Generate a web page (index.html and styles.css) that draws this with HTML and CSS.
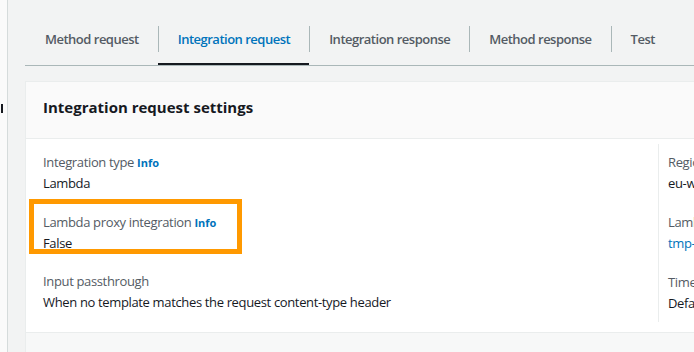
FILE: index.html
```html
<!DOCTYPE html>
<html lang="en">
<head>
  <meta charset="UTF-8">
  <title>Integration request</title>
  <link rel="stylesheet" href="styles.css">
</head>
<body>

  <!-- Barra lateral recortada -->
  <div class="lado">
    <span class="cursor"></span>
  </div>

  <div class="conteudo">
    <!-- Abas -->
    <div class="abas">
      <div class="aba"><span class="aba-texto primeira">Method request</span></div>
      <div class="aba ativa"><span class="aba-texto">Integration request</span></div>
      <div class="aba"><span class="aba-texto">Integration response</span></div>
      <div class="aba"><span class="aba-texto">Method response</span></div>
      <div class="aba"><span class="aba-texto">Test</span></div>
    </div>

    <!-- Cartão -->
    <div class="cartao">
      <div class="cartao-topo">
        <h2>Integration request settings</h2>
      </div>

      <div class="cartao-corpo">
        <div class="coluna">
          <div class="item">
            <div class="rotulo">Integration type <a class="info">Info</a></div>
            <div class="valor">Lambda</div>
          </div>
          <div class="item destaque">
            <div class="rotulo">Lambda proxy integration <a class="info">Info</a></div>
            <div class="valor">False</div>
            <span class="moldura"></span>
          </div>
          <div class="item">
            <div class="rotulo">Input passthrough</div>
            <div class="valor">When no template matches the request content-type header</div>
          </div>
        </div>

        <div class="coluna direita">
          <div class="item">
            <div class="rotulo">Region</div>
            <div class="valor">eu-west-1</div>
          </div>
          <div class="item">
            <div class="rotulo">Lambda function</div>
            <div class="valor link">tmp-function</div>
          </div>
          <div class="item">
            <div class="rotulo">Timeout</div>
            <div class="valor">Default timeout</div>
          </div>
        </div>
      </div>

      <div class="cartao-rodape"></div>
    </div>
  </div>

</body>
</html>
```

FILE: styles.css
```css
* {
  box-sizing: border-box;
  font-family: 'Open Sans', sans-serif;
}

body {
  margin: 0;
  padding: 0;
  background: #f2f3f3;
  display: flex;
  height: 352px;
  overflow: hidden;
}

.lado {
  width: 8px;
  flex-shrink: 0;
  background: #fafafa;
  border-right: 1px solid #d5dbdb;
  padding-top: 104px;
}

.cursor {
  display: block;
  width: 2px;
  height: 9px;
  margin-left: 1px;
  background: #16191f;
}

.conteudo {
  flex: 1;
  min-width: 0;
  padding-left: 17px;
  padding-top: 16px;
  overflow: hidden;
}

/* Abas */
.abas {
  display: flex;
  border-bottom: 1px solid #aab7b8;
}

.aba {
  padding: 10px 0 11px;
  border-bottom: 2px solid transparent;
}

.aba-texto {
  display: block;
  padding: 0 19px;
  line-height: 26px;
  font-size: 13px;
  font-weight: 600;
  letter-spacing: -0.5px;
  color: #545b64;
  border-left: 1px solid #aab7b8;
  white-space: nowrap;
}

.aba-texto.primeira {
  border-left-color: transparent;
}

.aba.ativa {
  border-bottom-color: #16191f;
}

.aba.ativa .aba-texto {
  color: #0073bb;
}

/* Cartão */
.cartao {
  margin-top: 15px;
  border-left: 1px solid #eaeded;
  border-top: 1px solid #eaeded;
  background: #fff;
}

.cartao-topo {
  background: #fafafa;
  border-bottom: 1px solid #eaeded;
  padding: 14px 17px 20px;
}

h2 {
  margin: 0;
  font-size: 15px;
  line-height: 22px;
  font-weight: 700;
  color: #16191f;
}

.cartao-corpo {
  display: grid;
  grid-template-columns: 615px 1fr;
  padding: 5px 0 10px 17px;
  border-bottom: 1px solid #eaeded;
}

.coluna {
  padding: 8px 0 9px;
}

.coluna.direita {
  border-left: 1px solid #eaeded;
  padding-left: 9px;
}

.item {
  position: relative;
  margin-bottom: 19px;
}

.item.destaque {
  margin-bottom: 18px;
}

.item:last-child {
  margin-bottom: 0;
}

.rotulo,
.valor {
  font-size: 13px;
  line-height: 20px;
  letter-spacing: -0.35px;
  white-space: nowrap;
}

.rotulo {
  color: #545b64;
}

.valor {
  margin-top: 1px;
  color: #16191f;
}

.info {
  font-size: 11px;
  line-height: 1;
  font-weight: 700;
  letter-spacing: 0;
  color: #0073bb;
}

.link {
  color: #0073bb;
}

.moldura {
  position: absolute;
  left: -14px;
  top: -13px;
  width: 213px;
  height: 55px;
  border: 5px solid #ff9900;
}

.cartao-rodape {
  height: 40px;
  background: #f7f8f8;
}
```
